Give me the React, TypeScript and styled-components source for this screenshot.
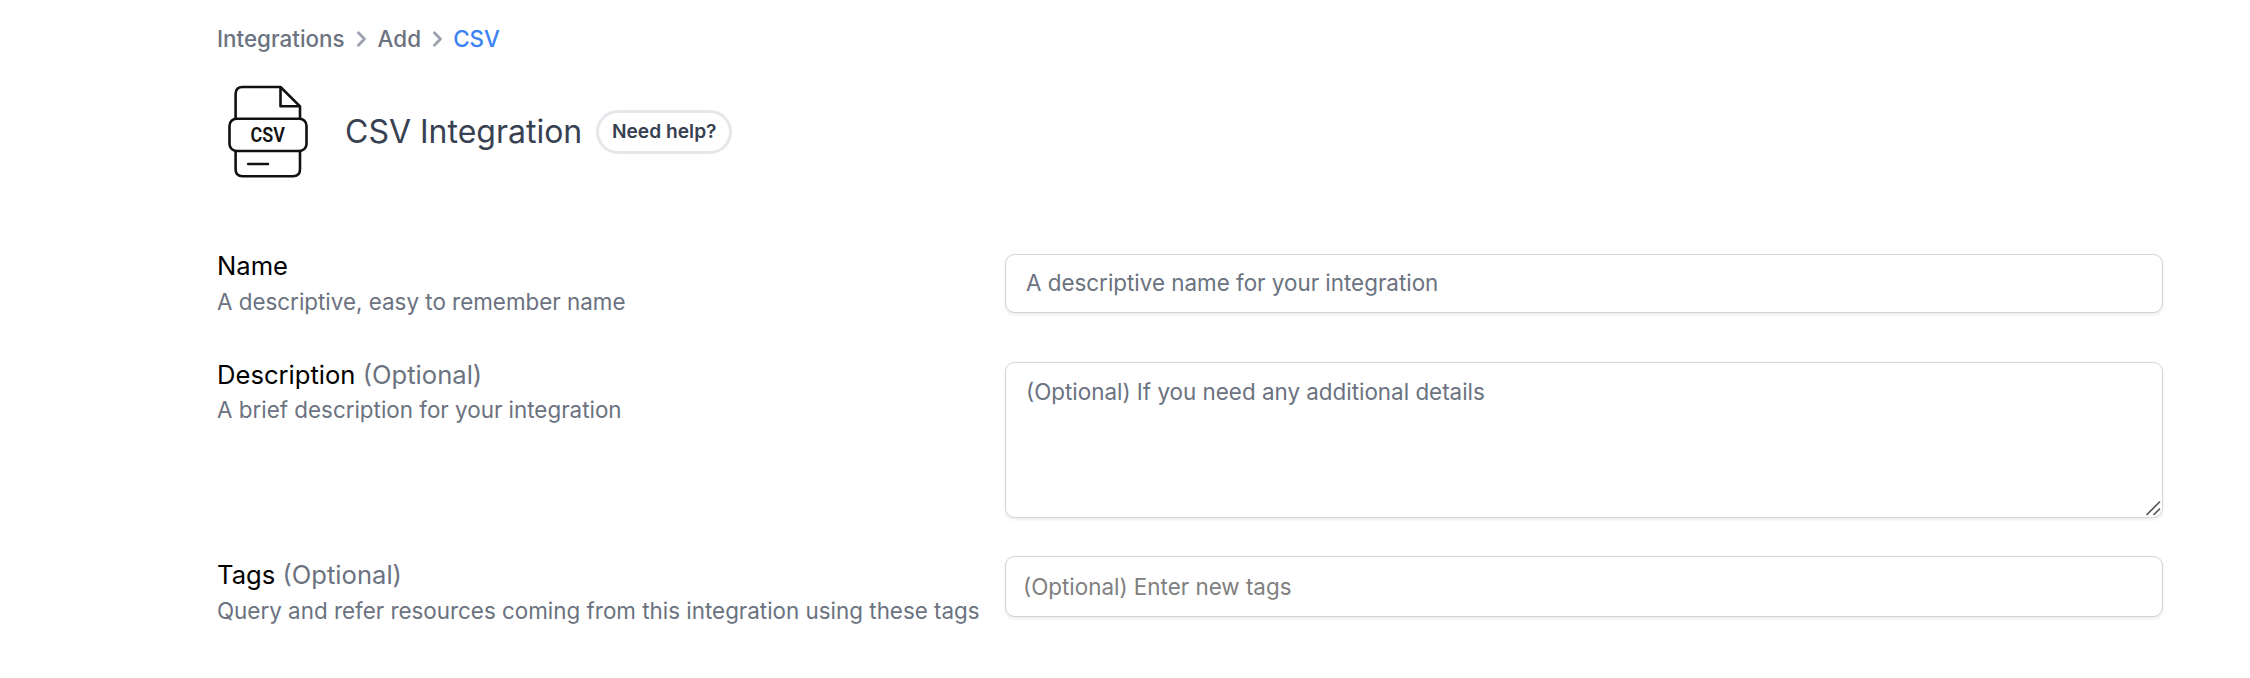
import React from 'react';
import styled, { createGlobalStyle } from 'styled-components';

const GlobalStyle = createGlobalStyle`
  *, *::before, *::after { box-sizing: border-box; }
  body {
    margin: 0;
    background: #fff;
    font-family: Inter, "Liberation Sans", sans-serif;
    font-size: 22.4px;
    color: #374151;
  }
`;

const Page = styled.main`
  min-height: 100vh;
  padding: 23.4px 87px 0 217px;
`;

const Breadcrumbs = styled.nav`
  display: flex;
  align-items: center;
  gap: 12px;
  height: 32px;
`;

const Crumb = styled.a<{ $active?: boolean }>`
  font-weight: 500;
  line-height: 32px;
  color: ${(p) => (p.$active ? '#3b82f6' : '#6b7280')};
  text-decoration: none;
  margin-left: ${(p) => (p.$active ? '-0.8px' : '0')};
`;

const Chevron = styled.svg`
  display: block;
  width: 9px;
  height: 16px;
  fill: none;
  stroke: #9ca3af;
  stroke-width: 2.8;
  stroke-linecap: round;
  stroke-linejoin: round;
`;

const Header = styled.header`
  display: flex;
  align-items: center;
  height: 96px;
  margin-top: 28.6px;
`;

const FileIcon = styled.svg`
  display: block;
  width: 103px;
  height: 96px;
  margin-right: 25px;
  fill: none;
  stroke: #111;
  stroke-width: 2.6;
  stroke-linecap: round;
  stroke-linejoin: round;

  text {
    fill: #111;
    stroke: none;
    font: 600 20.4px Roboto, sans-serif;
  }
`;

const Title = styled.h1`
  margin: 0;
  font-size: 32px;
  font-weight: 400;
  line-height: 38px;
  color: #374151;
`;

const HelpButton = styled.button`
  width: 136px;
  height: 44px;
  margin-left: 14px;
  padding: 0 0 2px;
  border: 3px solid #e5e7eb;
  border-radius: 22px;
  background: #fff;
  font: 600 19.2px/28px Inter, sans-serif;
  color: #374151;
`;

const Form = styled.form`
  display: flex;
  flex-direction: column;
  margin-top: 74px;
`;

const Field = styled.div<{ $height: number }>`
  display: grid;
  grid-template-columns: 788px 1158px;
  align-items: start;
  height: ${(p) => p.$height}px;
`;

const LabelBlock = styled.div<{ $raise?: number; $gap?: number }>`
  display: flex;
  flex-direction: column;
  gap: ${(p) => p.$gap ?? 0}px;
  margin-top: ${(p) => -(p.$raise ?? 0)}px;
`;

const Label = styled.label`
  display: block;
  font-size: 25.6px;
  line-height: 39px;
  color: #000;
`;

const Muted = styled.span`
  color: #6b7280;
`;

const Hint = styled.p`
  margin: 0;
  line-height: 32px;
  white-space: nowrap;
  color: #6b7280;
`;

const control = `
  display: block;
  width: 100%;
  margin: 0;
  border: 1px solid #d1d3dd;
  border-radius: 9.6px;
  background: #fff;
  box-shadow: 0 1.6px 3.2px rgba(0, 0, 0, 0.07);
  font: 400 22.4px/32px Inter, sans-serif;
  outline: none;
`;

const Input = styled.input<{ $tags?: boolean }>`
  ${control}
  height: ${(p) => (p.$tags ? 61 : 59)}px;
  padding: ${(p) => (p.$tags ? '0 17px' : '0 20px 2px')};
  &::placeholder { color: ${(p) => (p.$tags ? '#808080' : '#6b7280')}; opacity: 1; }
`;

const AreaWrap = styled.div`
  position: relative;
`;

const TextArea = styled.textarea`
  ${control}
  height: 156px;
  padding: 13px 20px;
  resize: none;
  &::placeholder { color: #6b7280; opacity: 1; }
`;

const Grip = styled.svg`
  position: absolute;
  right: 2px;
  bottom: 2px;
  width: 15px;
  height: 15px;
  stroke: #555;
  stroke-width: 1.7;
  stroke-linecap: round;
`;

const Separator = () => (
  <Chevron viewBox="0 0 9 16"><path d="M1.4 1.7 7.5 8 1.4 14.3" /></Chevron>
);

export default function App() {
  return (
    <>
      <GlobalStyle />
      <Page>
        <Breadcrumbs>
          <Crumb>Integrations</Crumb>
          <Separator />
          <Crumb>Add</Crumb>
          <Separator />
          <Crumb $active>CSV</Crumb>
        </Breadcrumbs>

        <Header>
          <FileIcon viewBox="0 0 103 96">
            <path d="M18.6 34.7V10Q18.6 3 25.6 3H63.5L83 22.3V34.7M63.5 3V22.3H83" />
            <rect x="12.5" y="34.7" width="77" height="32.3" rx="7" />
            <path d="M18.6 67V85.3Q18.6 92.3 25.6 92.3H76Q83 92.3 83 85.3V67M31.2 80H51" />
            <text x="33.6" y="57.8" textLength="34.4" lengthAdjust="spacingAndGlyphs">CSV</text>
          </FileIcon>
          <Title>CSV Integration</Title>
          <HelpButton type="button">Need help?</HelpButton>
        </Header>

        <Form>
          <Field $height={108}>
            <LabelBlock $raise={8} $gap={1}>
              <Label>Name</Label>
              <Hint>A descriptive, easy to remember name</Hint>
            </LabelBlock>
            <Input placeholder="A descriptive name for your integration" />
          </Field>
          <Field $height={194}>
            <LabelBlock $raise={7}>
              <Label>Description <Muted>(Optional)</Muted></Label>
              <Hint>A brief description for your integration</Hint>
            </LabelBlock>
            <AreaWrap>
              <TextArea placeholder="(Optional) If you need any additional details" />
              <Grip viewBox="0 0 15 15"><path d="M1 13.5 13.5 1M8 13.5 13.5 8" /></Grip>
            </AreaWrap>
          </Field>
          <Field $height={61}>
            <LabelBlock $raise={1} $gap={1}>
              <Label>Tags <Muted>(Optional)</Muted></Label>
              <Hint>Query and refer resources coming from this integration using these tags</Hint>
            </LabelBlock>
            <Input $tags placeholder="(Optional) Enter new tags" />
          </Field>
        </Form>
      </Page>
    </>
  );
}
